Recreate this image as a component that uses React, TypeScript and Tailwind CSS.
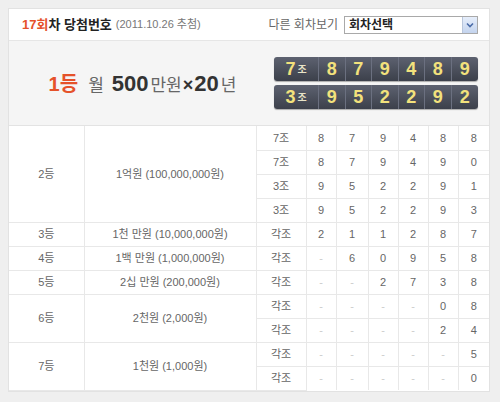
import React from "react";

const font = { fontFamily: '"Liberation Sans", "Noto Sans CJK KR", sans-serif' };

type Row = { rank?: string; prize?: string; span?: number; jo: string; nums: string[] };

const rows: Row[] = [
  { rank: "2등", prize: "1억원 (100,000,000원)", span: 4, jo: "7조", nums: ["8", "7", "9", "4", "8", "8"] },
  { jo: "7조", nums: ["8", "7", "9", "4", "9", "0"] },
  { jo: "3조", nums: ["9", "5", "2", "2", "9", "1"] },
  { jo: "3조", nums: ["9", "5", "2", "2", "9", "3"] },
  { rank: "3등", prize: "1천 만원 (10,000,000원)", span: 1, jo: "각조", nums: ["2", "1", "1", "2", "8", "7"] },
  { rank: "4등", prize: "1백 만원 (1,000,000원)", span: 1, jo: "각조", nums: ["-", "6", "0", "9", "5", "8"] },
  { rank: "5등", prize: "2십 만원 (200,000원)", span: 1, jo: "각조", nums: ["-", "-", "2", "7", "3", "8"] },
  { rank: "6등", prize: "2천원 (2,000원)", span: 2, jo: "각조", nums: ["-", "-", "-", "-", "0", "8"] },
  { jo: "각조", nums: ["-", "-", "-", "-", "2", "4"] },
  { rank: "7등", prize: "1천원 (1,000원)", span: 2, jo: "각조", nums: ["-", "-", "-", "-", "-", "5"] },
  { jo: "각조", nums: ["-", "-", "-", "-", "-", "0"] },
];

const digitW = ["w-[30px]", "w-[32px]", "w-[30px]", "w-[30px]", "w-[30px]", "w-[31px]"];

function NumberRow({ jo, nums }: { jo: string; nums: string[] }) {
  return (
    <div className="flex h-[24px] rounded-[3px] overflow-hidden bg-gradient-to-b from-[#5d6270] to-[#3c404b] shadow-[0_1px_1px_rgba(0,0,0,0.3)]">
      <div className="w-[45px] flex items-center justify-center border-r border-[#6b7080] text-[#f3e27c] font-bold">
        <span className="text-[18px] leading-none">{jo}</span>
        <span className="text-[10px] ml-[2px] text-[#e8e4c8]">조</span>
      </div>
      {nums.map((n, i) => (
        <div
          key={i}
          className={`w-[26.5px] flex items-center justify-center text-[18px] font-bold text-[#f3e27c] leading-none ${
            i < nums.length - 1 ? "border-r border-[#6b7080]" : ""
          }`}
        >
          {n}
        </div>
      ))}
    </div>
  );
}

export default function App() {
  return (
    <div className="w-[500px] h-[402px] bg-[#efefef] pt-[8px] pl-[8px]" style={font}>
      <div className="w-[482px] h-[384px] bg-white border border-[#e2e2e2] flex flex-col">
        {/* header */}
        <div className="h-[32px] flex items-center justify-between pl-[13px] pr-[11px] border-b border-[#e6e6e6]">
          <div className="flex items-center text-[13px] font-bold">
            <span className="text-[#e5522a]">17회</span>
            <span className="text-[#222]">차 당첨번호</span>
            <span className="text-[11px] font-normal text-[#777] ml-[4px]">(2011.10.26 추첨)</span>
          </div>
          <div className="flex items-center">
            <span className="text-[12px] text-[#666] mr-[6px]">다른 회차보기</span>
            <div className="w-[134px] h-[18px] border border-[#a9a9a9] flex items-center justify-between pl-[4px]">
              <span className="text-[12px] font-bold text-[#222]">회차선택</span>
              <div className="w-[15px] h-[16px] bg-gradient-to-b from-[#e6eefb] to-[#c4d4ee] border-l border-[#b8c6dc] flex items-center justify-center">
                <svg width="8" height="6" viewBox="0 0 8 6">
                  <path d="M1 1.5 L4 4.5 L7 1.5" stroke="#4a6ca8" strokeWidth="1.6" fill="none" />
                </svg>
              </div>
            </div>
          </div>
        </div>

        {/* first prize band */}
        <div className="h-[85px] bg-[#f5f5f5] border-b border-[#e3e3e3] flex items-center">
          <div className="w-[265px] flex items-baseline justify-center text-[#666] pl-[2px]">
            <span className="text-[20px] font-bold text-[#e5522a]">1등</span>
            <span className="text-[17px] ml-[10px]">월</span>
            <span className="text-[22px] font-bold text-[#333] ml-[8px]">500</span>
            <span className="text-[17px] ml-[2px]">만원</span>
            <span className="text-[18px] text-[#333] font-bold mx-[1px]">×</span>
            <span className="text-[22px] font-bold text-[#333]">20</span>
            <span className="text-[17px] ml-[2px]">년</span>
          </div>
          <div className="flex flex-col gap-[4px] w-[204px]">
            <NumberRow jo="7" nums={["8", "7", "9", "4", "8", "9"]} />
            <NumberRow jo="3" nums={["9", "5", "2", "2", "9", "2"]} />
          </div>
        </div>

        {/* table */}
        <table className="border-collapse table-fixed w-[480px] text-[11px] text-[#666]">
          <tbody>
            {rows.map((r, i) => (
              <tr key={i} className="h-[24px]">
                {r.rank && (
                  <>
                    <td rowSpan={r.span} className="w-[75px] text-center border-b border-r border-[#e8e8e8]">
                      {r.rank}
                    </td>
                    <td rowSpan={r.span} className="w-[172px] text-center border-b border-r border-[#e8e8e8]">
                      {r.prize}
                    </td>
                  </>
                )}
                <td className="w-[50px] text-center border-b border-r border-[#e8e8e8]">{r.jo}</td>
                {r.nums.map((n, j) => (
                  <td
                    key={j}
                    className={`${digitW[j]} text-center border-b border-[#e8e8e8] ${j < 5 ? "border-r" : ""} ${
                      n === "-" ? "text-[#ccc]" : "text-[#666]"
                    } ${i === rows.length - 1 ? "border-b-0" : ""}`}
                  >
                    {n}
                  </td>
                ))}
              </tr>
            ))}
          </tbody>
        </table>
      </div>
    </div>
  );
}
